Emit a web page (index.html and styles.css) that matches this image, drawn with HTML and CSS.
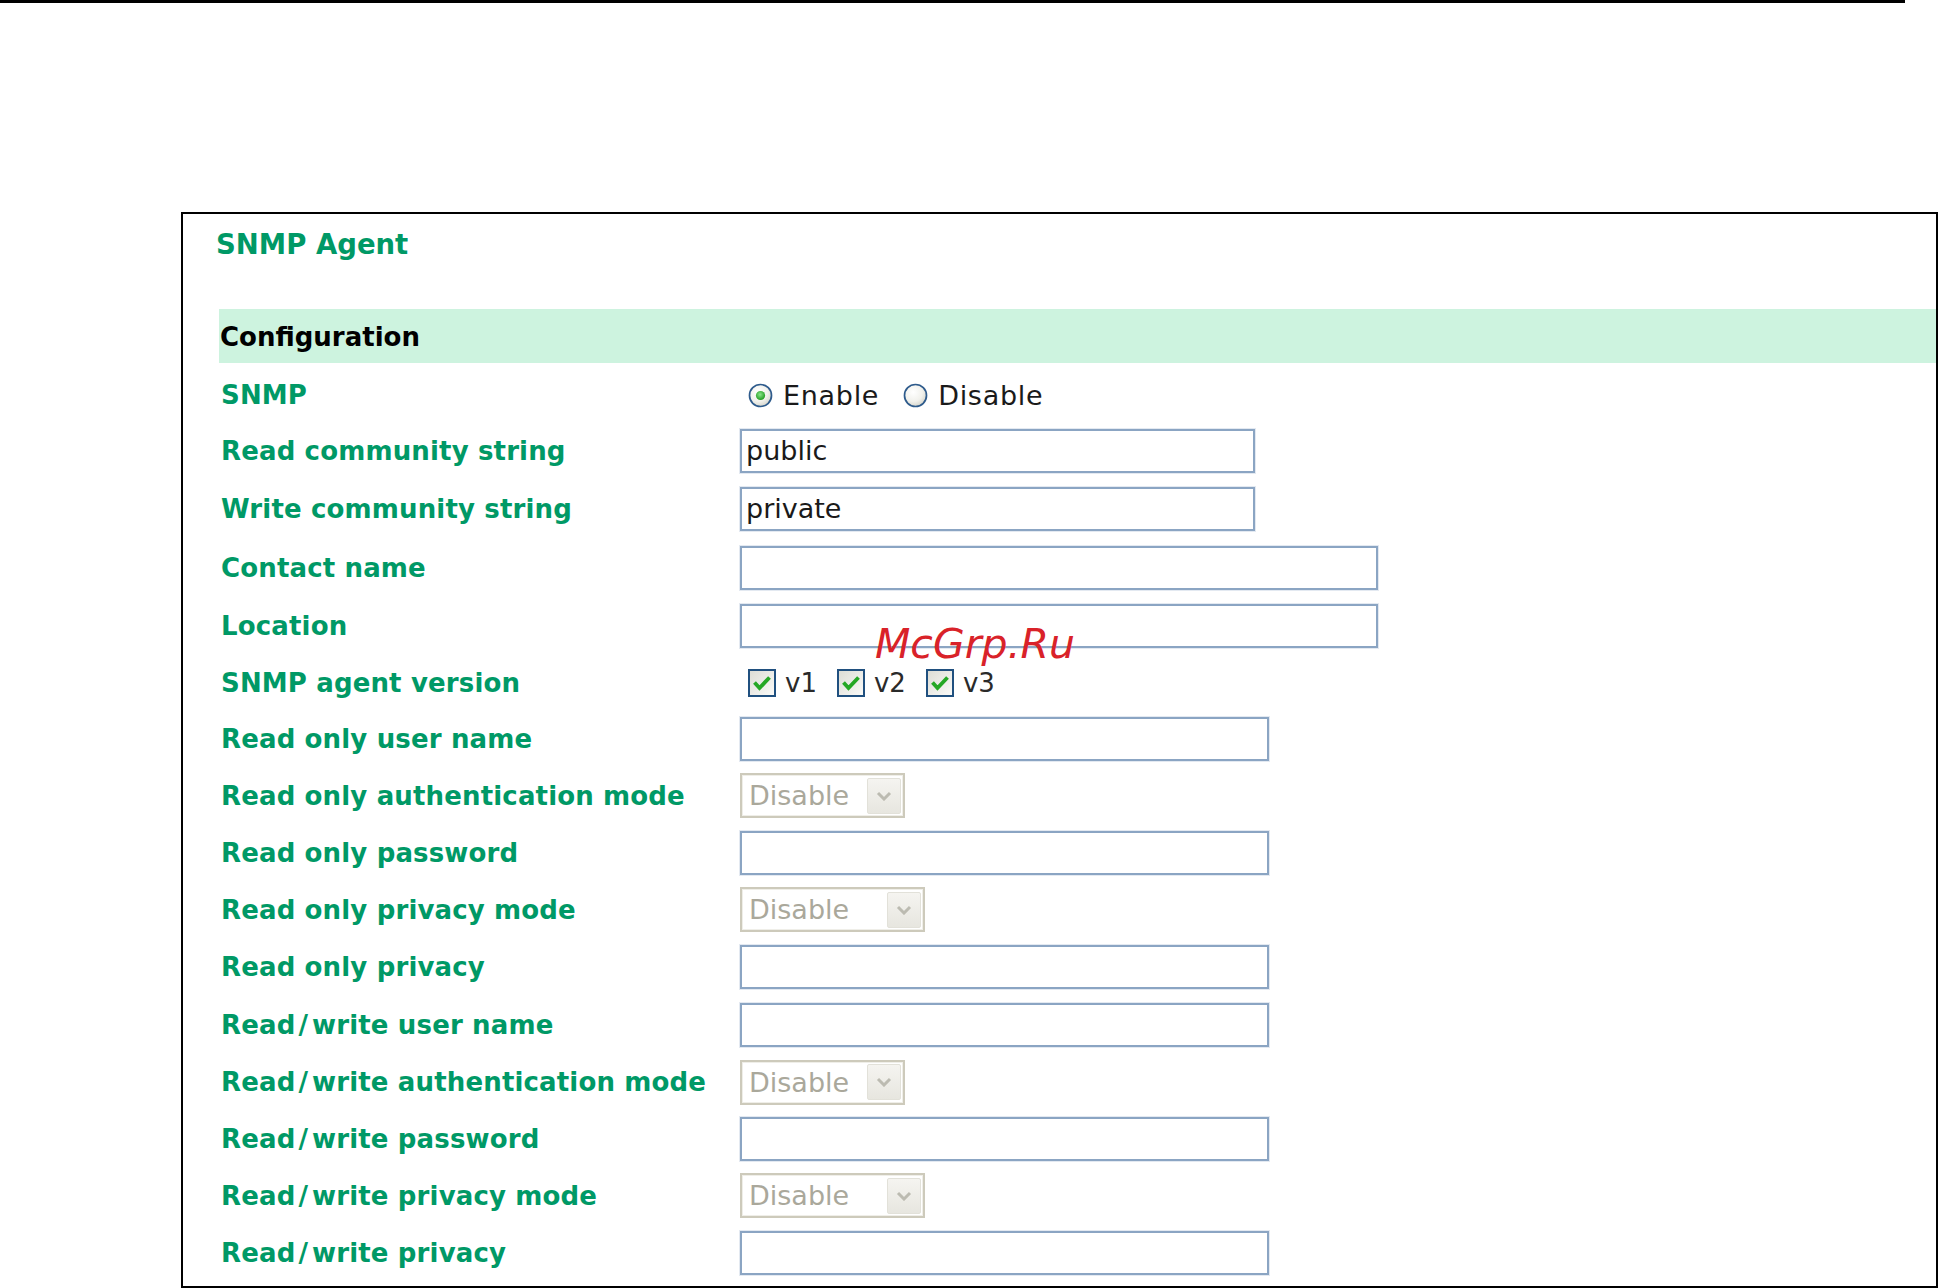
FILE: index.html
```html
<!DOCTYPE html>
<html>
<head>
<meta charset="utf-8">
<title>SNMP Agent</title>
<link rel="stylesheet" href="styles.css">
</head>
<body>
<div class="topline"></div>
<div class="frame">
  <h1 class="title">SNMP Agent</h1>
  <div class="band">Configuration</div>
  <div class="form">
    <div class="label first">SNMP</div>
    <div class="ctrl radios">
      <span class="opt">
        <svg class="radio" width="25" height="25" viewBox="0 0 25 25">
          <defs>
            <radialGradient id="rg" cx="40%" cy="35%" r="70%">
              <stop offset="0" stop-color="#ffffff"/>
              <stop offset="0.6" stop-color="#f1f1ec"/>
              <stop offset="1" stop-color="#d2d2c8"/>
            </radialGradient>
            <radialGradient id="dot" cx="45%" cy="40%" r="60%">
              <stop offset="0" stop-color="#8be68b"/>
              <stop offset="1" stop-color="#1f9b1f"/>
            </radialGradient>
            <linearGradient id="cg" x1="0" y1="0" x2="1" y2="1">
              <stop offset="0" stop-color="#dcdcd4"/>
              <stop offset="1" stop-color="#fbfbf9"/>
            </linearGradient>
          </defs>
          <circle cx="12.5" cy="12.5" r="11" fill="url(#rg)" stroke="#2e5b8c" stroke-width="1.7"/>
          <circle cx="12.5" cy="12.5" r="4.6" fill="url(#dot)"/>
        </svg>
        <span class="opt-text">Enable</span>
      </span>
      <span class="opt">
        <svg class="radio" width="25" height="25" viewBox="0 0 25 25">
          <circle cx="12.5" cy="12.5" r="11" fill="url(#rg)" stroke="#2e5b8c" stroke-width="1.7"/>
        </svg>
        <span class="opt-text">Disable</span>
      </span>
    </div>

    <div class="label">Read community string</div>
    <div class="ctrl"><input class="text w-short" type="text" value="public"></div>

    <div class="label">Write community string</div>
    <div class="ctrl"><input class="text w-short" type="text" value="private"></div>

    <div class="label">Contact name</div>
    <div class="ctrl"><input class="text w-long" type="text" value=""></div>

    <div class="label">Location</div>
    <div class="ctrl"><input class="text w-long" type="text" value=""></div>

    <div class="label">SNMP agent version</div>
    <div class="ctrl checks">
      <span class="chk">
        <svg width="28" height="28" viewBox="0 0 28 28">
          <rect x="1" y="1" width="26" height="26" fill="url(#cg)" stroke="#20507f" stroke-width="2"/>
          <path d="M6.5 13.5 L11.5 19 L21.5 8.5" fill="none" stroke="#25a825" stroke-width="3.8"/>
        </svg>
        <span>v1</span>
      </span>
      <span class="chk">
        <svg width="28" height="28" viewBox="0 0 28 28">
          <rect x="1" y="1" width="26" height="26" fill="url(#cg)" stroke="#20507f" stroke-width="2"/>
          <path d="M6.5 13.5 L11.5 19 L21.5 8.5" fill="none" stroke="#25a825" stroke-width="3.8"/>
        </svg>
        <span>v2</span>
      </span>
      <span class="chk">
        <svg width="28" height="28" viewBox="0 0 28 28">
          <rect x="1" y="1" width="26" height="26" fill="url(#cg)" stroke="#20507f" stroke-width="2"/>
          <path d="M6.5 13.5 L11.5 19 L21.5 8.5" fill="none" stroke="#25a825" stroke-width="3.8"/>
        </svg>
        <span>v3</span>
      </span>
    </div>

    <div class="label">Read only user name</div>
    <div class="ctrl"><input class="text w-mid" type="text" value=""></div>

    <div class="label">Read only authentication mode</div>
    <div class="ctrl">
      <div class="select s-auth"><span>Disable</span><span class="arrow"><svg width="16" height="10" viewBox="0 0 16 10"><path d="M2 2 L8 8 L14 2" fill="none" stroke="#bcbbb1" stroke-width="3"/></svg></span></div>
    </div>

    <div class="label">Read only password</div>
    <div class="ctrl"><input class="text w-mid" type="password" value=""></div>

    <div class="label">Read only privacy mode</div>
    <div class="ctrl">
      <div class="select s-priv"><span>Disable</span><span class="arrow"><svg width="16" height="10" viewBox="0 0 16 10"><path d="M2 2 L8 8 L14 2" fill="none" stroke="#bcbbb1" stroke-width="3"/></svg></span></div>
    </div>

    <div class="label">Read only privacy</div>
    <div class="ctrl"><input class="text w-mid" type="text" value=""></div>

    <div class="label">Read<span class="sl">/</span>write user name</div>
    <div class="ctrl"><input class="text w-mid" type="text" value=""></div>

    <div class="label">Read<span class="sl">/</span>write authentication mode</div>
    <div class="ctrl">
      <div class="select s-auth"><span>Disable</span><span class="arrow"><svg width="16" height="10" viewBox="0 0 16 10"><path d="M2 2 L8 8 L14 2" fill="none" stroke="#bcbbb1" stroke-width="3"/></svg></span></div>
    </div>

    <div class="label">Read<span class="sl">/</span>write password</div>
    <div class="ctrl"><input class="text w-mid" type="password" value=""></div>

    <div class="label">Read<span class="sl">/</span>write privacy mode</div>
    <div class="ctrl">
      <div class="select s-priv"><span>Disable</span><span class="arrow"><svg width="16" height="10" viewBox="0 0 16 10"><path d="M2 2 L8 8 L14 2" fill="none" stroke="#bcbbb1" stroke-width="3"/></svg></span></div>
    </div>

    <div class="label">Read<span class="sl">/</span>write privacy</div>
    <div class="ctrl"><input class="text w-mid" type="text" value=""></div>
  </div>
</div>
<div class="watermark">McGrp.Ru</div>
</body>
</html>
```
FILE: styles.css
```css
html, body {
  margin: 0;
  padding: 0;
  background: #ffffff;
}

body {
  font-family: "DejaVu Sans", Verdana, sans-serif;
  color: #1a1a1a;
  overflow: hidden;
}

.topline {
  width: 1905px;
  height: 3px;
  background: #000000;
}

.frame {
  box-sizing: border-box;
  margin: 209px 0 0 181px;
  width: 1757px;
  height: 1076px;
  border: 2px solid #000000;
}

.title {
  margin: 14px 0 0 33px;
  font-size: 27.5px;
  line-height: 32px;
  font-weight: bold;
  color: #009966;
}

.band {
  box-sizing: border-box;
  margin: 49px 0 0 36px;
  height: 54px;
  padding: 3px 0 0 1px;
  line-height: 51px;
  background: #cdf3df;
  font-size: 26px;
  font-weight: bold;
  color: #000000;
}

.form {
  margin-left: 36px;
  display: grid;
  grid-template-columns: 521px 1fr;
  grid-template-rows: 59px 57px 59px 59px 58px 56px 56px 57px 57px 57px 58px 58px 56px 57px 57px 57px;
  align-items: center;
}

.label {
  padding-left: 2px;
  font-size: 26px;
  line-height: 30px;
  font-weight: bold;
  letter-spacing: 0.15px;
  color: #009966;
  white-space: nowrap;
}

.label.first {
  padding-top: 4px;
}

.sl {
  margin: 0 4px 0 3px;
}

.ctrl {
  display: flex;
  align-items: center;
  font-size: 27px;
}

.radios {
  padding: 5px 0 0 8px;
}

.opt {
  display: inline-flex;
  align-items: center;
  gap: 10px;
  margin-right: 24px;
  color: #1a1a1a;
}

.opt-text {
  letter-spacing: 0.7px;
}

.radio {
  display: block;
}

.checks {
  padding-left: 8px;
  font-size: 26px;
}

.chk {
  display: inline-flex;
  align-items: center;
  gap: 9px;
  margin-right: 20px;
  color: #2a2a2a;
}

.chk svg {
  display: block;
}

.text {
  display: block;
  box-sizing: border-box;
  height: 44px;
  margin: 0;
  padding: 0 0 0 4px;
  border: 2px solid #8ba5c3;
  box-shadow: 0 0 0 1px #e3e9f1;
  background: #ffffff;
  font-family: "DejaVu Sans", Verdana, sans-serif;
  font-size: 27px;
  color: #1a1a1a;
  outline: none;
}

.w-short { width: 515px; }
.w-mid { width: 529px; }
.w-long { width: 638px; }

.select {
  box-sizing: border-box;
  height: 45px;
  display: flex;
  align-items: center;
  justify-content: space-between;
  padding: 0 2px 0 7px;
  border: 2px solid #cdcabb;
  box-shadow: inset 0 0 0 1px #efeee8;
  background: #ffffff;
  color: #aaa89b;
  font-size: 27px;
}

.s-auth { width: 165px; }
.s-priv { width: 185px; }

.arrow {
  box-sizing: border-box;
  width: 34px;
  height: 36px;
  display: flex;
  align-items: center;
  justify-content: center;
  border: 1px solid #e2e1d9;
  border-radius: 2px;
  background: linear-gradient(#f5f4f0, #e7e6df);
}

.arrow svg {
  display: block;
}

.watermark {
  position: absolute;
  left: 875px;
  top: 624px;
  font-family: "DejaVu Sans", sans-serif;
  font-style: italic;
  font-size: 41px;
  line-height: 41px;
  color: #d92229;
}
```
